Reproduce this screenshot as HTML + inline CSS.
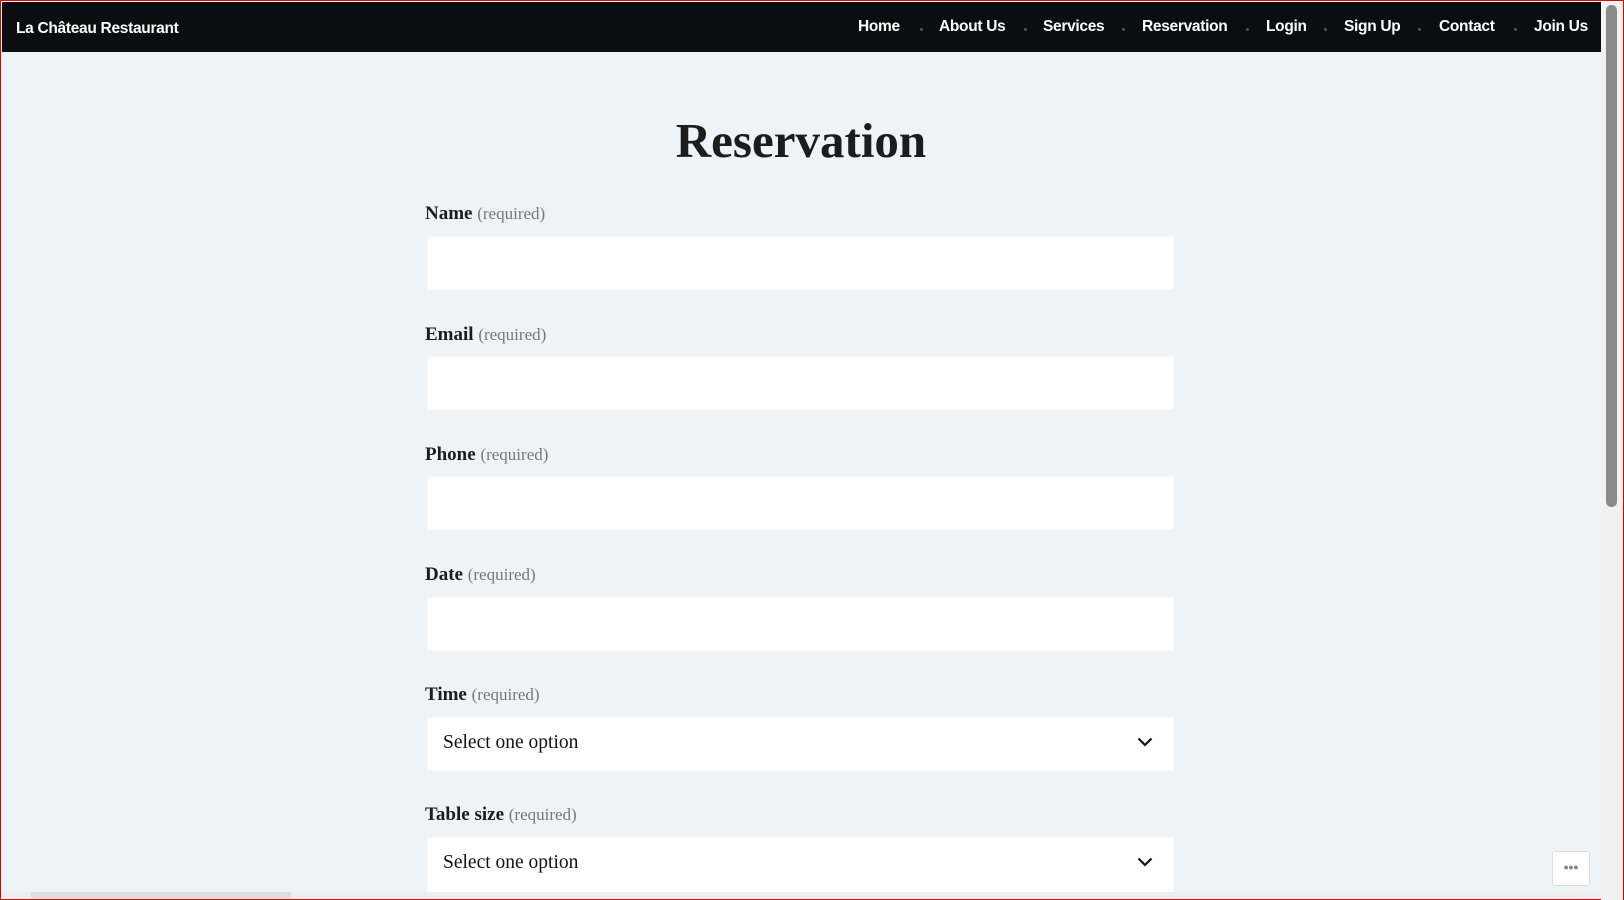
<!DOCTYPE html>
<html><head><meta charset="utf-8"><style>
*{margin:0;padding:0;box-sizing:border-box}
html,body{width:1624px;height:900px;overflow:hidden}
body{background:#eef3f7;font-family:"Liberation Serif",serif;position:relative;border:1px solid #e00000}
.nav{position:absolute;left:1px;top:1px;width:1600px;height:50px;background:#0b0d10}
.nav a{position:absolute;top:16px;color:#fff;font:bold 15.5px "Liberation Sans",sans-serif;letter-spacing:-0.3px;text-decoration:none;white-space:nowrap}
.dot{position:absolute;top:26px;width:3px;height:3px;border-radius:50%;background:#555}
.logo{position:absolute;left:14px;top:18px;color:#fff;font:bold 15.5px "Liberation Sans",sans-serif;letter-spacing:-0.3px}
h1{position:absolute;left:0;width:1600px;top:111px;text-align:center;font:bold 49px "Liberation Serif",serif;color:#1c1c1c}
.lab{position:absolute;left:424px;font-weight:bold;font-size:19px;color:#1c1c1c}
.lab span{font-weight:normal;font-size:17px;color:#777}
.in{position:absolute;left:425px;width:749px;height:56px;background:#fff;border:2px solid #f3f5f8}
.in .t{position:absolute;left:15px;top:14px;font-size:19.5px;color:#111}
.in svg{position:absolute;right:20px;top:19px}
.sb{position:absolute;right:0;top:0;width:22px;height:899px;background:#f1f1f1}
.thumb{position:absolute;right:6px;top:4px;width:11px;height:502px;background:#8a8a8a;border-radius:5px}
.more{position:absolute;left:1551px;top:850px;width:38px;height:35px;background:#fff;border:1px solid #ddd;border-radius:3px;text-align:center;color:#888;font:bold 14px "Liberation Sans",sans-serif;line-height:30px}
.hs{position:absolute;left:1px;bottom:0;width:1600px;height:7px;background:#eee}
</style></head><body>
<div class="nav">
<div class="logo">La Château Restaurant</div>
<a style="left:856px">Home</a><i class="dot" style="left:918px"></i>
<a style="left:937px">About Us</a><i class="dot" style="left:1022px"></i>
<a style="left:1041px">Services</a><i class="dot" style="left:1120px"></i>
<a style="left:1140px">Reservation</a><i class="dot" style="left:1244px"></i>
<a style="left:1264px">Login</a><i class="dot" style="left:1322px"></i>
<a style="left:1342px">Sign Up</a><i class="dot" style="left:1416px"></i>
<a style="left:1437px">Contact</a><i class="dot" style="left:1512px"></i>
<a style="left:1532px">Join Us</a>
</div>
<h1>Reservation</h1>
<div class="lab" style="top:202px">Name <span>(required)</span></div><div class="in" style="top:234px"></div>
<div class="lab" style="top:323px">Email <span>(required)</span></div><div class="in" style="top:354px"></div>
<div class="lab" style="top:443px">Phone <span>(required)</span></div><div class="in" style="top:474px"></div>
<div class="lab" style="top:563px">Date <span>(required)</span></div><div class="in" style="top:595px"></div>
<div class="lab" style="top:683px">Time <span>(required)</span></div><div class="in" style="top:715px"><div class="t">Select one option</div><svg width="16" height="10" viewBox="0 0 16 10"><path d="M1.5 1.5L8 8l6.5-6.5" fill="none" stroke="#111" stroke-width="2.2"/></svg></div>
<div class="lab" style="top:803px">Table size <span>(required)</span></div><div class="in" style="top:835px;height:60px"><div class="t">Select one option</div><svg width="16" height="10" viewBox="0 0 16 10"><path d="M1.5 1.5L8 8l6.5-6.5" fill="none" stroke="#111" stroke-width="2.2"/></svg></div>
<div class="more">•••</div>
<div class="hs"><div style="width:260px;margin-left:29px;height:7px;background:#ddd"></div></div>
<div class="sb"><div class="thumb"></div></div>
</body></html>
